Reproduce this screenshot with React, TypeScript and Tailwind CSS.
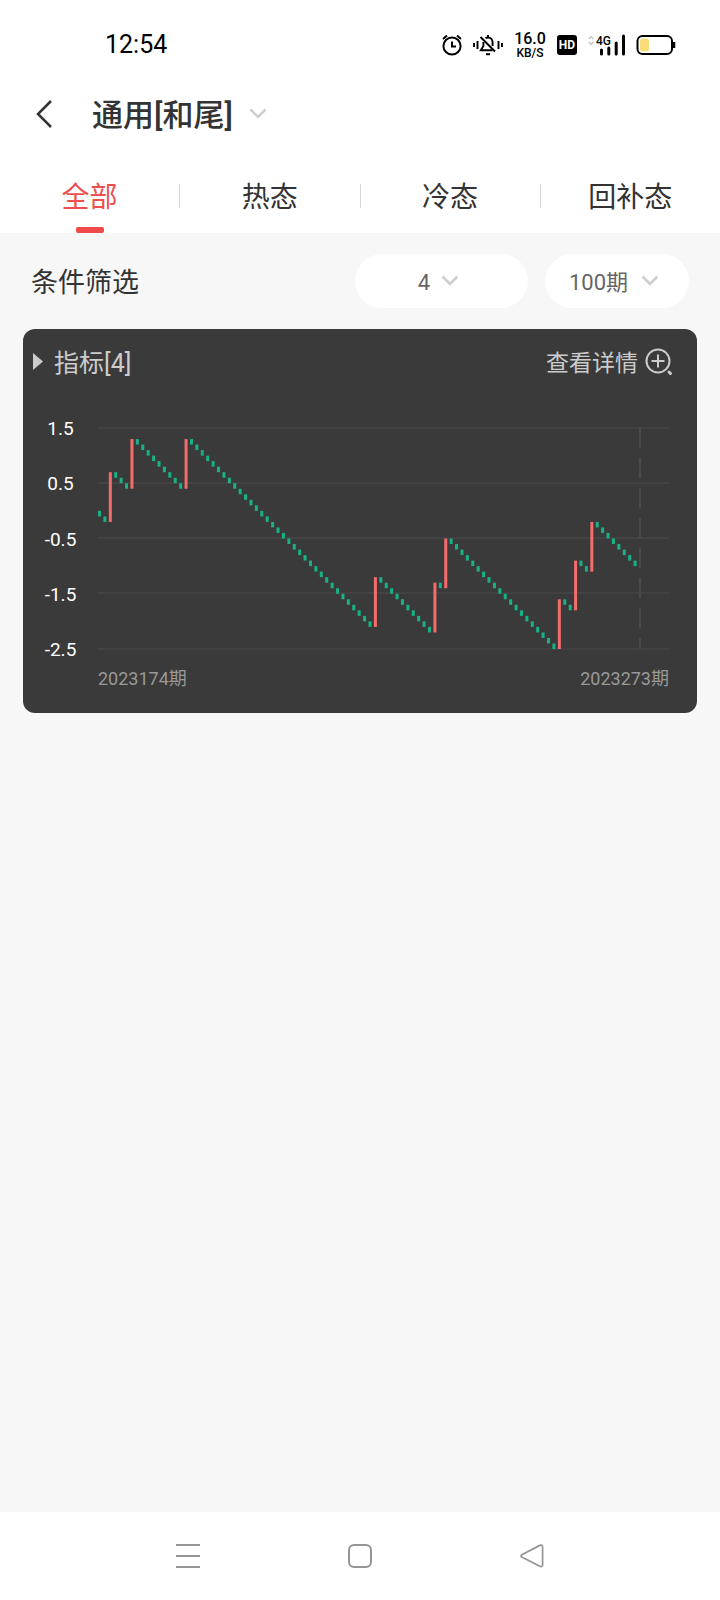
import { useState } from 'react';

const TABS = ['全部', '热态', '冷态', '回补态'];

const AXIS_LABELS = ['1.5', '0.5', '-0.5', '-1.5', '-2.5'];
const GRID_LINES = [1, 56, 111, 166, 222];

// positions where the indicator jumps up, every other period drops by one step
const HITS = [2, 6, 16, 51, 62, 64, 85, 88, 91];
const PERIODS = 100;

function buildBars() {
  const bars: { index: number; top: number; size: number; hit: boolean }[] = [];
  let level = 0;
  for (let index = 0; index < PERIODS; index++) {
    const hit = HITS.includes(index);
    const next = hit ? level + 9 : level - 1;
    bars.push({ index, top: Math.max(level, next), size: Math.abs(next - level), hit });
    level = next;
  }
  return bars;
}

function ChevronDown() {
  return (
    <svg className="w-[18px] h-[12px] shrink-0 pointer-events-none" viewBox="0 0 18 12" fill="none" stroke="#cfcfcf" strokeWidth="2.6">
      <path d="M1.5 1.5 9 9l7.5-7.5" />
    </svg>
  );
}

function StatusBar() {
  return (
    <div className="flex h-[90px] items-center justify-between pl-[105px] pr-[44px] text-black">
      <span className="text-[25px] leading-8">12:54</span>
      <div className="flex items-center gap-[11px]">
        <svg className="w-5 h-[22px]" viewBox="0 0 20 22" fill="none" stroke="black" strokeWidth="2">
          <circle cx="10" cy="12" r="8.6" />
          <path d="M10 7.5v5h4M1 5l4-3.5M19 5l-4-3.5" />
        </svg>
        <svg className="w-[30px] h-[22px]" viewBox="0 0 30 22" fill="none" stroke="black" strokeWidth="1.9">
          <path d="M1 9v4M4.5 7v8M25.5 7v8M29 9v4" />
          <path d="M12.500 4.200C13.200 3.700 14 3.500 15 3.500c2.800 0 4.600 2.200 4.600 5v3.500M15 3.500V1M10.400 8v4L7.800 16.200H19.500" />
          <path d="M7.500 3 22 17.500" />
          <path d="M13 20.200h4" strokeWidth="2" />
        </svg>
        <div className="flex w-8 flex-col items-center font-medium">
          <span className="text-[16px] leading-4">16.0</span>
          <span className="text-[12px] leading-3">KB/S</span>
        </div>
        <span className="flex h-5 w-5 items-center justify-center rounded-[3px] bg-black text-[12px] font-bold leading-none text-white">
          HD
        </span>
        <svg className="w-[37px] h-[22px]" viewBox="0 0 37 22">
          <path d="M.8 5 3 2.500 5.200 5M.8 8 3 10.500 5.200 8" fill="none" stroke="#c8c8c8" strokeWidth="1.4" />
          <text x="8" y="11" fontSize="12" fontWeight="500">4G</text>
          <path d="M13.500 16V20M20.800 14V20M28.200 9V20M35.500 2V20" stroke="black" strokeWidth="3" strokeLinecap="round" />
        </svg>
        <svg className="w-10 h-[22px]" viewBox="0 0 40 22">
          <rect x="1.500" y="2" width="34.500" height="18" rx="5" fill="none" stroke="black" strokeWidth="2" />
          <rect x="4" y="4.500" width="9" height="13" rx="2.500" fill="#fbdc78" />
          <path d="M38 8v6" stroke="black" strokeWidth="2.500" />
        </svg>
      </div>
    </div>
  );
}

interface FilterSelectProps {
  label: string;
  value: string;
  className: string;
}

function FilterSelect({ label, value, className }: FilterSelectProps) {
  return (
    <label className={`flex h-[54px] items-center justify-center rounded-full bg-white ${className}`}>
      <select
        aria-label={label}
        defaultValue={value}
        className="field-sizing-content appearance-none bg-transparent pt-1 text-[22px] leading-8 text-[#666666] outline-none"
      >
        <option value={value}>{value}</option>
      </select>
      <ChevronDown />
    </label>
  );
}

function TrendChart() {
  return (
    <svg className="block w-full" viewBox="0 0 572 223">
      {GRID_LINES.map((y) => (
        <path key={y} d={`M0 ${y}H571`} stroke="#424242" strokeWidth="2" />
      ))}
      <path d="M542 1V222" stroke="#4a4a4a" strokeWidth="2" strokeDasharray="20 10" />
      {buildBars().map((bar) => (
        <rect
          key={bar.index}
          x={bar.index * 5.41}
          y={1 + (15 - bar.top) * 5.525}
          width="3"
          height={bar.size * 5.525}
          fill={bar.hit ? '#f56c6c' : '#19b187'}
        />
      ))}
    </svg>
  );
}

function IndicatorCard() {
  return (
    <section className="mx-[23px] mt-[21px] rounded-xl bg-[#3a3a3a] pt-[10px] pb-[22px]">
      <div className="flex h-[46px] items-center justify-between pl-[10px] pr-6 text-[#cccccc]">
        <button type="button" className="flex items-center gap-[11px] text-[25px] leading-8">
          <svg className="w-[10px] h-[18px]" viewBox="0 0 10 18" fill="currentColor">
            <path d="M0 0 10 8.500 0 17z" />
          </svg>
          <span className="pt-1">指标[4]</span>
        </button>
        <button type="button" className="flex items-center gap-[7px] text-[23px] leading-8">
          <span className="pt-1">查看详情</span>
          <svg className="w-7 h-7" viewBox="0 0 28 28" fill="none" stroke="currentColor" strokeWidth="2">
            <circle cx="13" cy="13" r="11.500" />
            <path d="M13 6.500v13M6.500 13h13" />
            <path d="M24 24l1.500 1.500" strokeWidth="3" strokeLinecap="round" />
          </svg>
        </button>
      </div>
      <div className="mt-[42px] flex pr-[27px]">
        <div className="-mt-2 -mb-[10px] flex w-[75px] shrink-0 flex-col justify-between text-center text-[19px] leading-5 text-white">
          {AXIS_LABELS.map((label) => (
            <span key={label}>{label}</span>
          ))}
        </div>
        <div className="min-w-0 flex-1">
          <TrendChart />
        </div>
      </div>
      <div className="mt-[17px] flex justify-between pl-[75px] pr-7 text-[18px] leading-6 text-[#999999]">
        <span>2023174期</span>
        <span>2023273期</span>
      </div>
    </section>
  );
}

function NavBar() {
  return (
    <footer className="flex h-[88px] items-center justify-center gap-[148px] bg-white">
      <button type="button" aria-label="菜单">
        <svg className="block w-6 h-6" viewBox="0 0 24 24" stroke="#959595" strokeWidth="2">
          <path d="M0 1h24M0 12h24M0 23h24" />
        </svg>
      </button>
      <button type="button" aria-label="主页">
        <svg className="block w-6 h-6" viewBox="0 0 24 24" fill="none" stroke="#959595" strokeWidth="2">
          <rect x="1" y="1" width="22" height="22" rx="5" />
        </svg>
      </button>
      <button type="button" aria-label="返回上一页">
        <svg className="block w-6 h-6" viewBox="0 0 24 24" fill="none" stroke="#959595" strokeWidth="1.700">
          <path d="M1.800 10.700 19.800 1.400Q22.600.3 22.600 3.200V20.400Q22.600 23.400 19.800 22.200L1.800 13.100Q0 11.900 1.800 10.700z" />
        </svg>
      </button>
    </footer>
  );
}

export default function App() {
  const [activeTab, setActiveTab] = useState(TABS[0]);

  return (
    <div className="flex min-h-screen flex-col bg-[#f7f7f7] font-[Roboto,'Noto_Sans_CJK_SC',sans-serif] text-[#333333]">
      <header className="bg-white">
        <StatusBar />
        <div className="mb-[21px] flex h-12 items-center pl-9">
          <button type="button" aria-label="返回">
            <svg className="block w-4 h-7" viewBox="0 0 16 28" fill="none" stroke="currentColor" strokeWidth="2.500">
              <path d="M15 1 2 14l13 13" />
            </svg>
          </button>
          <button type="button" className="ml-10 flex items-center gap-4">
            <h1 className="pt-1 text-[31px] font-medium leading-10">通用[和尾]</h1>
            <ChevronDown />
          </button>
        </div>
        <nav className="flex h-[74px] items-center divide-x divide-[#d8d8d8]">
          {TABS.map((tab) => (
            <div key={tab} className="flex h-6 flex-1 items-center justify-center">
              <button
                type="button"
                onClick={() => setActiveTab(tab)}
                className={`relative flex h-[74px] items-center pt-1 text-[28px] ${tab === activeTab ? 'text-[#ee4e4e]' : ''}`}
              >
                {tab}
                {tab === activeTab && (
                  <span className="absolute bottom-0 left-1/2 h-[6px] w-7 -translate-x-1/2 rounded-[2px] bg-[#f04b4b]" />
                )}
              </button>
            </div>
          ))}
        </nav>
      </header>
      <main className="flex-1">
        <div className="flex items-center gap-[17px] pt-[21px] pl-[31px] pr-[31px]">
          <h2 className="flex-1 pt-1 text-[27px] leading-9">条件筛选</h2>
          <FilterSelect label="和尾" value="4" className="w-[173px] gap-[11px] pr-[6px]" />
          <FilterSelect label="期数" value="100期" className="w-36 gap-[13px] pr-[6px]" />
        </div>
        <IndicatorCard />
      </main>
      <NavBar />
    </div>
  );
}
